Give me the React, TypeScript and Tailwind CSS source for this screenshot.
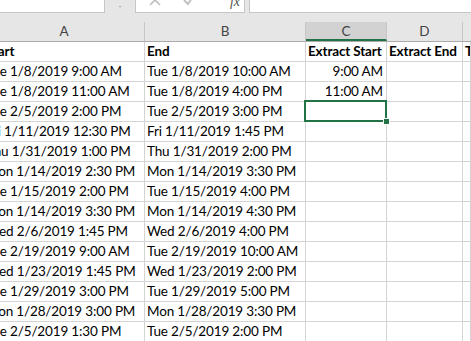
const rows: [string, string, string][] = [
  ['Tue 1/8/2019 9:00 AM', 'Tue 1/8/2019 10:00 AM', '9:00 AM'],
  ['Tue 1/8/2019 11:00 AM', 'Tue 1/8/2019 4:00 PM', '11:00 AM'],
  ['Tue 2/5/2019 2:00 PM', 'Tue 2/5/2019 3:00 PM', ''],
  ['Fri 1/11/2019 12:30 PM', 'Fri 1/11/2019 1:45 PM', ''],
  ['Thu 1/31/2019 1:00 PM', 'Thu 1/31/2019 2:00 PM', ''],
  ['Mon 1/14/2019 2:30 PM', 'Mon 1/14/2019 3:30 PM', ''],
  ['Tue 1/15/2019 2:00 PM', 'Tue 1/15/2019 4:00 PM', ''],
  ['Mon 1/14/2019 3:30 PM', 'Mon 1/14/2019 4:30 PM', ''],
  ['Wed 2/6/2019 1:45 PM', 'Wed 2/6/2019 4:00 PM', ''],
  ['Tue 2/19/2019 9:00 AM', 'Tue 2/19/2019 10:00 AM', ''],
  ['Wed 1/23/2019 1:45 PM', 'Wed 1/23/2019 2:00 PM', ''],
  ['Tue 1/29/2019 3:00 PM', 'Tue 1/29/2019 5:00 PM', ''],
  ['Mon 1/28/2019 3:00 PM', 'Mon 1/28/2019 3:30 PM', ''],
  ['Tue 2/5/2019 1:30 PM', 'Tue 2/5/2019 2:00 PM', ''],
];

const base = 'h-5 border-r border-b border-[#d4d4d4] whitespace-nowrap leading-[19px]';
const cell = `${base} overflow-hidden`;

const App = () => {
  return (
    <div className="w-[471px] h-[341px] overflow-hidden bg-white text-black font-['Lato','Liberation_Sans',sans-serif] text-[13.5px] tracking-[-0.15px]">
      {/* formula bar */}
      <div className="h-[22px] bg-[#e6e6e6] flex items-start">
        <div className="w-[105px] h-[13px] bg-white border-b border-r border-[#c6c6c6]" />
        <div className="w-[30px] h-[13px] flex justify-center items-end text-[#9a9a9a] text-[10px] leading-none pb-[3px]">·</div>
        <div className="w-[110px] h-[13px] bg-white border-b border-x border-[#c6c6c6] relative overflow-hidden">
          <svg className="absolute left-[12px] top-[-7px]" width="14" height="14" viewBox="0 0 14 14">
            <path d="M2 2 L12 12 M12 2 L2 12" stroke="#bdbdbd" strokeWidth="1.6" />
          </svg>
          <svg className="absolute left-[46px] top-[-7px]" width="14" height="14" viewBox="0 0 14 14">
            <path d="M2 7 L6 11 L12 2" stroke="#bdbdbd" strokeWidth="1.8" fill="none" />
          </svg>
          <span className="absolute left-[94px] top-[-9px] italic text-[14px] text-[#555] font-['Liberation_Serif',serif]">fx</span>
        </div>
        <div className="w-[4px]" />
        <div className="flex-1 h-[13px] bg-white border-b border-l border-[#c6c6c6]" />
      </div>

      {/* column headers */}
      <div className="flex h-5 bg-[#e6e6e6] border-b border-[#ababab] text-[#444] text-[13.5px] tracking-normal leading-[19px]">
        <div className="w-[145px] shrink-0 border-r border-[#c6c6c6] text-center pr-[16px]">A</div>
        <div className="w-[161px] shrink-0 border-r border-[#c6c6c6] text-center">B</div>
        <div className="w-[81px] shrink-0 border-r border-[#c6c6c6] bg-[#d2d2d2] border-b-2 border-b-[#217346] text-center">C</div>
        <div className="w-[76px] shrink-0 border-r border-[#c6c6c6] text-center">D</div>
        <div className="flex-1" />
      </div>

      {/* header row */}
      <div className="flex font-bold">
        <div className={`${cell} w-[145px] shrink-0`}><span className="ml-[-16px] pl-[2px]">Start</span></div>
        <div className={`${cell} w-[161px] shrink-0 pl-[2px]`}>End</div>
        <div className={`${cell} w-[81px] shrink-0 pl-[2px]`}>Extract Start</div>
        <div className={`${cell} w-[76px] shrink-0 pl-[2px]`}>Extract End</div>
        <div className={`${cell} flex-1 pl-[2px]`}>T</div>
      </div>

      {rows.map(([start, end, ext], i) => (
        <div key={i} className="flex">
          <div className={`${cell} w-[145px] shrink-0`}><span className="ml-[-16px] pl-[2px]">{start}</span></div>
          <div className={`${cell} w-[161px] shrink-0 pl-[2px]`}>{end}</div>
          <div className={`${base} w-[81px] shrink-0 pr-[3px] text-right relative ${i === 2 ? 'z-10' : ''}`}>
            {ext}
            {i === 2 && (
              <>
                <div className="absolute left-[-2px] top-[-2px] right-[-1px] bottom-[-1px] border-2 border-[#217346]" />
                <div className="absolute right-[-4px] bottom-[-4px] w-[7px] h-[7px] bg-[#217346] border border-white" />
              </>
            )}
          </div>
          <div className={`${cell} w-[76px] shrink-0`} />
          <div className={`${cell} flex-1`} />
        </div>
      ))}
    </div>
  );
};

export default App;
